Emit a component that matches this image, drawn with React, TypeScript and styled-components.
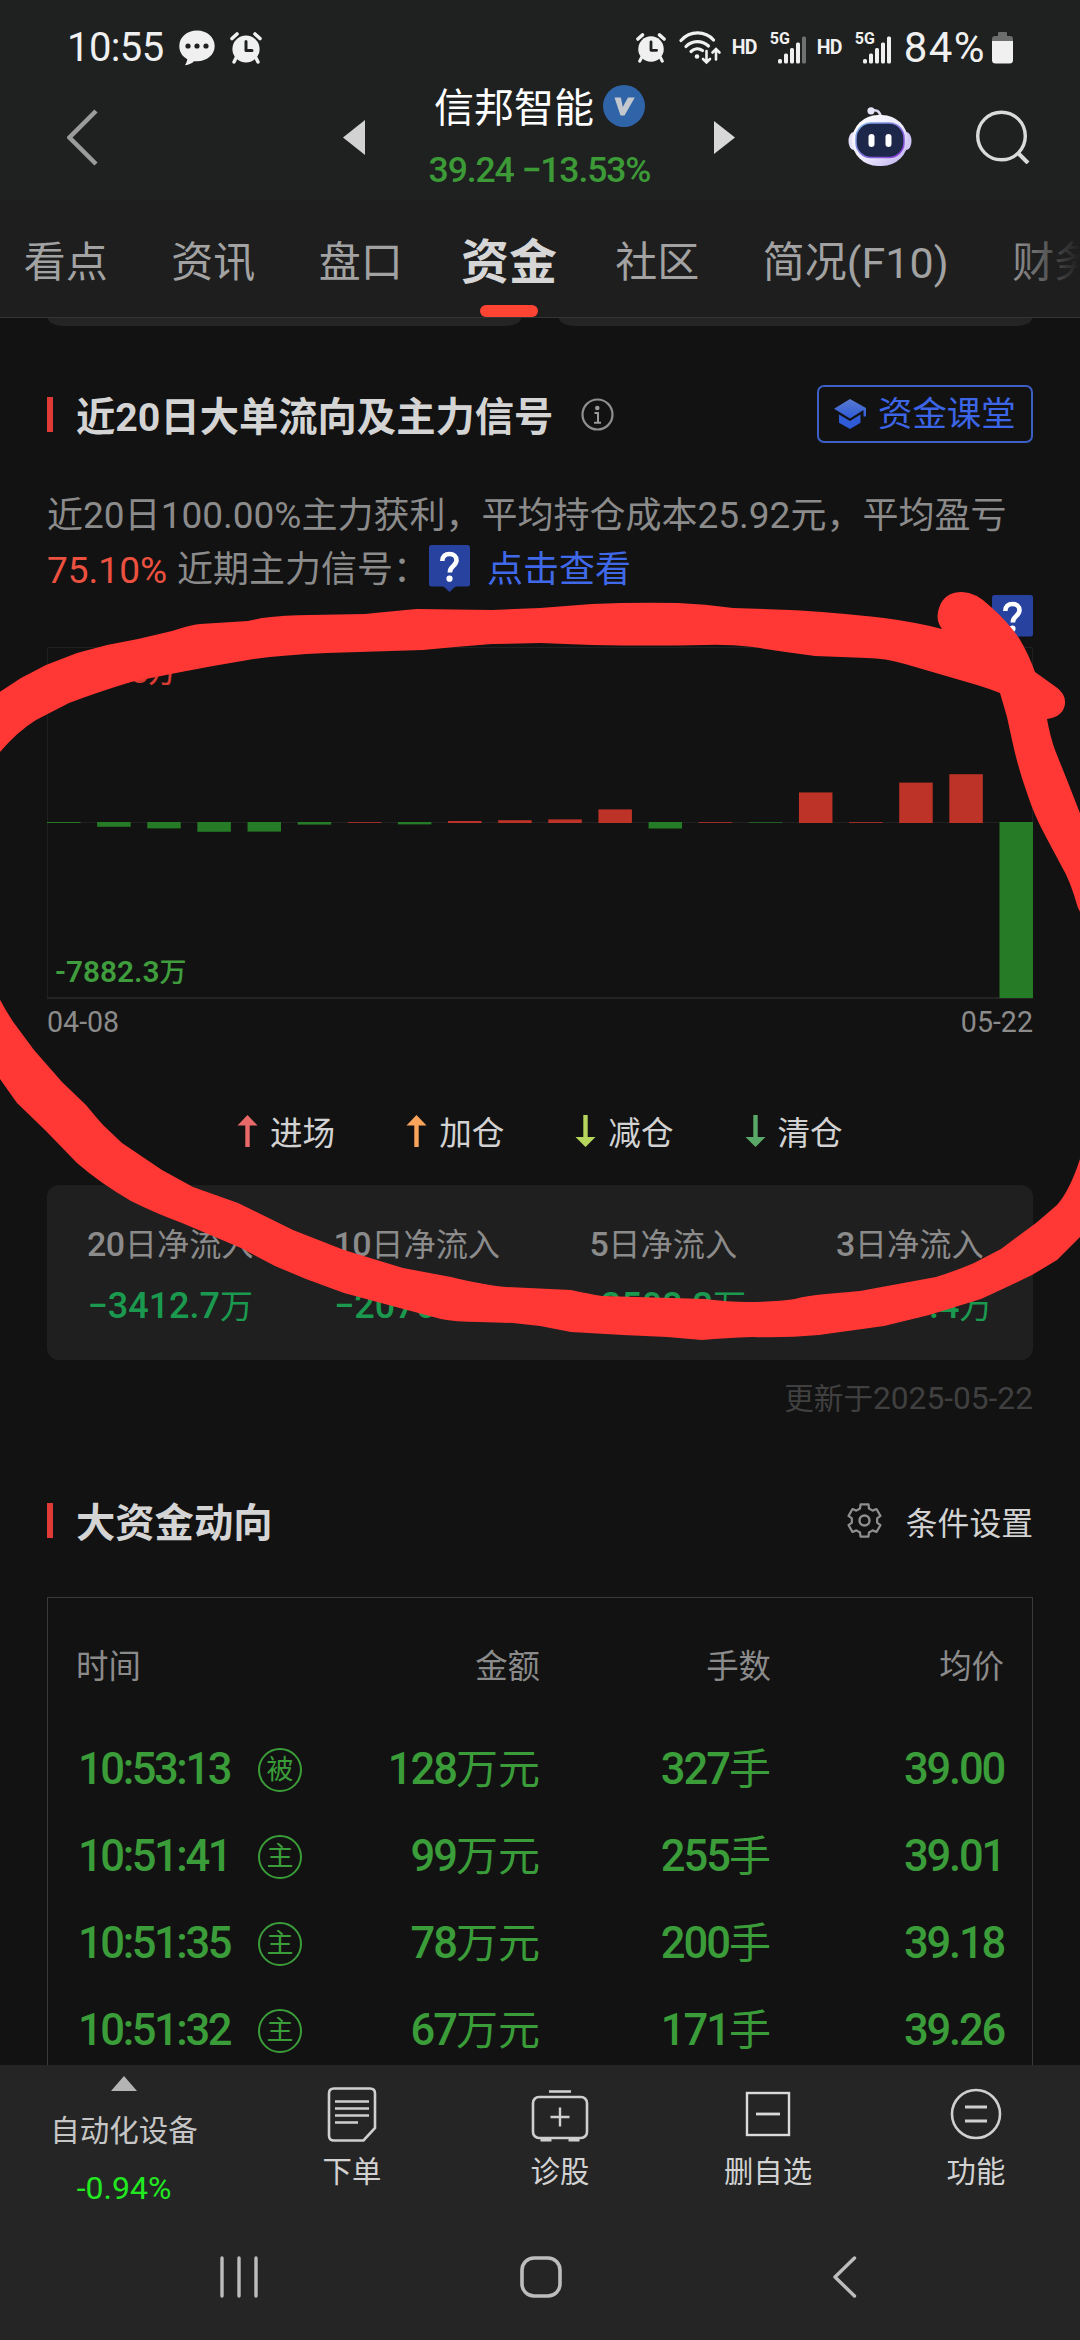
import React from 'react';
import styled, { createGlobalStyle } from 'styled-components';

const GlobalStyle = createGlobalStyle`
  * { box-sizing: border-box; }
  body { margin: 0; background: #121212; }
`;

const fontStack = `Roboto, 'Noto Sans CJK SC', sans-serif`;

const Screen = styled.div`
  position: relative;
  display: flex;
  flex-direction: column;
  width: 1080px;
  height: 2340px;
  overflow: hidden;
  background: #121212;
  color: #d2d2d2;
  font-family: ${fontStack};
  white-space: nowrap;
`;

/* ---------- status bar ---------- */

const Header = styled.header`
  height: 200px;
  flex: none;
  background: #1f2121;
`;

const StatusBar = styled.div`
  display: flex;
  align-items: center;
  height: 80px;
  padding: 15px 67px 0 67px;
  color: #f0f0f0;
`;

const StatusText = styled.span<{ $spacing: number }>`
  font-size: 40px;
  line-height: 48px;
  letter-spacing: ${(p) => p.$spacing}px;
`;

const StatusLeft = styled.div`
  display: flex;
  align-items: center;
  gap: 15px;
`;

const StatusRight = styled.div`
  display: flex;
  align-items: center;
  gap: 0;
  margin-left: auto;
`;

const WifiSlot = styled.span`
  display: flex;
  margin-left: 13px;
`;

const HdText = styled.span`
  width: 26px;
  margin: 0 12px 0 10px;
  font-size: 19.5px;
  line-height: 24px;
  font-weight: 700;
  letter-spacing: -0.8px;
`;

const Signal = styled.div`
  display: flex;
  width: 37px;
  height: 32px;
  align-items: flex-start;
`;

const SignalText = styled.span`
  width: 8px;
  font-size: 16px;
  line-height: 14px;
  font-weight: 700;
`;

const Percent = styled(StatusText)`
  margin-left: 12px;
  margin-right: 6px;
  font-size: 42px;
`;

/* ---------- stock title bar ---------- */

const TitleBar = styled.div`
  display: flex;
  align-items: center;
  height: 114px;
  padding-left: 67px;
`;

const PrevSlot = styled.div`
  display: flex;
  margin-left: 245px;
`;

const StockInfo = styled.div`
  display: flex;
  flex-direction: column;
  align-items: center;
  gap: 11px;
  width: 349px;
  padding-top: 5px;
`;

const StockName = styled.div`
  display: flex;
  align-items: center;
  gap: 9px;
  height: 50px;
  font-size: 40px;
  line-height: 50px;
  color: #ffffff;
`;

const VerifiedBadge = styled.span`
  display: flex;
  align-items: center;
  justify-content: center;
  width: 42px;
  height: 42px;
  margin-bottom: 6px;
  border-radius: 50%;
  background: #3064a8;
`;

const StockQuote = styled.div`
  height: 50px;
  font-size: 35.5px;
  line-height: 50px;
  font-weight: 500;
  letter-spacing: -1.1px;
  color: #3c9a37;
`;

const HeaderActions = styled.div`
  display: flex;
  align-items: center;
  gap: 64px;
  margin-left: 113px;
`;

/* ---------- tabs ---------- */

const TabBar = styled.nav`
  position: relative;
  display: flex;
  flex: none;
  height: 118px;
  border-bottom: 1px solid #353535;
  background: #1e1e1e;
  overflow: hidden;
`;

const TabTrack = styled.div`
  display: flex;
  margin-left: -8px;
`;

const Tab = styled.div<{ $active?: boolean }>`
  position: relative;
  display: flex;
  justify-content: center;
  flex: none;
  width: ${(p) => (p.$active ? '149px' : 'auto')};
  padding: 33px ${(p) => (p.$active ? 0 : 31.75)}px 0;
  font-size: ${(p) => (p.$active ? 48 : 42)}px;
  line-height: 60px;
  font-weight: ${(p) => (p.$active ? 700 : 400)};
  color: ${(p) => (p.$active ? '#d6d6d6' : '#a2a2a2')};
`;

const TabIndicator = styled.span`
  position: absolute;
  left: 45px;
  bottom: 0;
  width: 58px;
  height: 12px;
  border-radius: 6px;
  background: #ff4433;
`;

const TabFade = styled.span`
  position: absolute;
  top: 0;
  right: 0;
  width: 76px;
  height: 116px;
  background: linear-gradient(90deg, rgba(30, 30, 30, 0), #1e1e1e);
`;

/* ---------- content ---------- */

const Content = styled.main`
  display: flex;
  flex-direction: column;
  flex: 1;
  min-height: 0;
  padding: 0 47px;
  overflow: hidden;
`;

const PeekRow = styled.div`
  display: flex;
  flex: none;
  gap: 38px;
  height: 8px;
  padding: 0 1px;
`;

const PeekCard = styled.div`
  flex: 1;
  border-radius: 0 0 16px 16px / 0 0 8px 8px;
  background: #242424;
`;

const SectionHead = styled.div<{ $top: number }>`
  display: flex;
  flex: none;
  align-items: center;
  height: 58px;
  margin-top: ${(p) => p.$top}px;
`;

const Accent = styled.span`
  width: 6px;
  height: 35px;
  background: #e03a37;
`;

const SectionTitle = styled.h2`
  margin: 0 0 0 23px;
  padding-top: 8px;
  font-size: 39.3px;
  line-height: 50px;
  font-weight: 700;
  color: #d4d4d4;
`;

const InfoSlot = styled.span`
  display: flex;
  margin-left: 28px;
`;

const ClassButton = styled.button`
  display: flex;
  align-items: center;
  gap: 11px;
  width: 216px;
  height: 58px;
  margin: 0 0 0 auto;
  padding: 0 0 0 15px;
  border: 2px solid #3b5fc4;
  border-radius: 7px;
  background: transparent;
  font-family: ${fontStack};
  font-size: 34.4px;
  line-height: 50px;
  color: #3c66e6;
`;

const Summary = styled.div`
  flex: none;
  margin-top: 45px;
  font-size: 36px;
  line-height: 55px;
  color: #8b8b8b;
`;

const SummaryLine = styled.div`
  height: 55px;
`;

const SignalLine = styled(SummaryLine)`
  display: flex;
`;

const Latin = styled.span<{ $size: number }>`
  font-size: ${(p) => p.$size}px;
`;

const Gain = styled(Latin)`
  margin-right: 10px;
  color: #ec5140;
`;

const SignalLink = styled.a`
  margin-left: 17px;
  color: #4069ea;
`;

const TagSlot = styled.span`
  display: flex;
  margin: 2px 0 0;
`;

const FlowChart = styled.div`
  position: relative;
  flex: none;
  height: 352px;
  margin-top: 49px;
`;

const ChartTag = styled.div`
  position: absolute;
  top: -52px;
  right: 0;
  display: flex;
`;

const ChartLabel = styled.span<{ $tone: 'up' | 'down' }>`
  position: absolute;
  left: 8px;
  ${(p) => (p.$tone === 'up' ? 'top: 6px;' : 'bottom: 6px;')}
  font-size: 27px;
  line-height: 40px;
  font-weight: 500;
  color: ${(p) => (p.$tone === 'up' ? '#d93c33' : '#3f9d3d')};
`;

const ChartDigits = styled.span`
  font-size: 29.8px;
  font-weight: 600;
`;

const DateRow = styled.div`
  display: flex;
  flex: none;
  justify-content: space-between;
  margin-top: 5px;
  font-size: 28.6px;
  line-height: 36px;
  color: #8b8b8b;
`;

const Legend = styled.div`
  display: flex;
  flex: none;
  gap: 71px;
  margin-top: 71px;
  padding-left: 190px;
`;

const LegendItem = styled.div`
  display: flex;
  align-items: center;
  gap: 12px;
  height: 40px;
  font-size: 32.6px;
  line-height: 40px;
  color: #d2d2d2;
`;

const LegendText = styled.span`
  padding-top: 5px;
`;

const NetCard = styled.div`
  display: grid;
  flex: none;
  grid-template-columns: repeat(4, 1fr);
  height: 175px;
  margin-top: 34px;
  padding-top: 35px;
  border-radius: 12px;
  background: #1f1f1f;
`;

const NetCell = styled.div`
  display: flex;
  flex-direction: column;
  align-items: center;
  gap: 13px;
  line-height: 48px;
`;

const NetLabel = styled.span`
  font-size: 32.2px;
  color: #8b8b8b;
`;

const NetValue = styled.span`
  font-size: 33px;
  color: #1b9a4f;
`;

const Digits = styled.span<{ $size: number; $spacing?: number }>`
  font-size: ${(p) => p.$size}px;
  font-weight: 500;
  letter-spacing: ${(p) => p.$spacing ?? 0}px;
`;

const Updated = styled.div`
  flex: none;
  height: 40px;
  margin-top: 19px;
  text-align: right;
  font-size: 29.6px;
  line-height: 40px;
  color: #404040;
`;

const Settings = styled.div`
  display: flex;
  align-items: center;
  gap: 24px;
  margin-left: auto;
  font-size: 31.8px;
  line-height: 50px;
  color: #d2d2d2;
`;

const SettingsText = styled.span`
  padding-top: 7px;
`;

/* ---------- trade table ---------- */

const Table = styled.div`
  flex: none;
  height: 600px;
  margin-top: 48px;
  padding: 0 28px;
  border: 1px solid #3a3a3a;
`;

const TableRow = styled.div<{ $head?: boolean }>`
  display: grid;
  grid-template-columns: 226px 238px 231px 233px;
  align-items: center;
  height: ${(p) => (p.$head ? 128 : 87)}px;
  padding-top: ${(p) => (p.$head ? 10 : 0)}px;
  font-size: ${(p) => (p.$head ? 32.4 : 42)}px;
  line-height: 60px;
  color: ${(p) => (p.$head ? '#8b8b8b' : '#3a9d39')};
`;

const Cell = styled.div<{ $right?: boolean }>`
  text-align: ${(p) => (p.$right ? 'right' : 'left')};
`;

const TradeCell = styled(Cell)`
  padding-top: 1px;
`;

const TimeCell = styled.div`
  display: flex;
  align-items: center;
  justify-content: space-between;
  padding-left: 2px;
`;

const TimeDigits = styled.span`
  padding-top: 1px;
  font-size: 43.5px;
  font-weight: 500;
  letter-spacing: -2.4px;
`;

const TypeBadge = styled.span`
  display: flex;
  align-items: center;
  justify-content: center;
  width: 44px;
  height: 44px;
  border: 2px solid #3a9d39;
  border-radius: 50%;
  font-size: 27px;
  line-height: 40px;
`;

/* ---------- bottom ---------- */

const BottomArea = styled.footer`
  flex: none;
  height: 275px;
  background: #252525;
`;

const Toolbar = styled.div`
  display: flex;
  height: 145px;
`;

const SectorItem = styled.div`
  display: flex;
  flex-direction: column;
  align-items: center;
  width: 248px;
  padding-top: 11px;
`;

const SectorName = styled.span`
  margin-top: 20px;
  font-size: 29.5px;
  line-height: 40px;
  color: #c6c6c6;
`;

const SectorChange = styled.span`
  margin-top: 16px;
  font-size: 32px;
  line-height: 42px;
  color: #22e822;
`;

const ToolItem = styled.div`
  display: flex;
  flex-direction: column;
  align-items: center;
  width: 208px;
  padding-top: 18px;
  font-size: 29.4px;
  line-height: 40px;
  color: #d2d2d2;
`;

const ToolIcon = styled.span`
  display: flex;
  height: 64px;
  margin-bottom: 5px;
`;

const NavBar = styled.div`
  display: grid;
  grid-template-columns: 301px 312px 25px;
  align-items: center;
  height: 134px;
  padding-left: 219px;
`;

const Annotation = styled.svg`
  position: absolute;
  left: 0;
  top: 0;
  pointer-events: none;
`;

/* ---------- icons ---------- */

const AlarmIcon = ({ size }: { size: number }) => (
  <svg width={size} height={size} viewBox="0 0 32 32">
    <circle cx="16" cy="17" r="13.6" fill="#f0f0f0" />
    <path d="M2 6.5 7 2M30 6.5 25 2" stroke="#f0f0f0" strokeWidth="3.6" strokeLinecap="round" />
    <path d="M6 26 4 30M26 26l2 4" stroke="#f0f0f0" strokeWidth="3.4" strokeLinecap="round" />
    <path d="M16 9.5v9h6" fill="none" stroke="#1f2121" strokeWidth="3" strokeLinejoin="round" strokeLinecap="round" />
  </svg>
);

const ChatIcon = () => (
  <svg width="36" height="36" viewBox="0 0 36 36">
    <path
      d="M18 0.5C8 0.5 0.3 7 0.3 16c0 6 3 10.500 8 13.200-.3 2-1 4-2.300 6 4-.5 7-2 9-4h3c10 0 17.700-6.500 17.700-15.200S28 .5 18 .5z"
      fill="#f0f0f0"
    />
    <circle cx="9" cy="16" r="2.600" fill="#1f2121" />
    <circle cx="18" cy="16" r="2.600" fill="#1f2121" />
    <circle cx="27" cy="16" r="2.600" fill="#1f2121" />
  </svg>
);

const WifiIcon = () => (
  <svg width="43" height="34" viewBox="0 0 43 34" fill="none" stroke="#f0f0f0" strokeLinecap="round">
    <path d="M2 9.500C11-.5 26-.5 34.500 9" strokeWidth="3.200" />
    <path d="M7 15.500c6-6.500 16-6.500 22.500-.5" strokeWidth="3.200" />
    <path d="M12 20.500c3.500-3.200 8-3.500 11.500-1" strokeWidth="3.200" />
    <circle cx="18" cy="25.500" r="2.300" fill="#f0f0f0" stroke="none" />
    <path d="M27.500 20v11M24 28l3.500 3.500L31 28" strokeWidth="2.600" />
    <path d="M37 28.500V18.500M33.500 21.500 37 18l3.500 3.500" strokeWidth="2.600" />
  </svg>
);

const SignalBars = ({ full }: { full: boolean }) => (
  <svg width="29" height="32" viewBox="0 0 29 32">
    <rect x="0" y="27" width="4" height="4.500" rx="1.500" fill="#f0f0f0" />
    <rect x="6" y="21.500" width="4" height="10" rx="1.500" fill="#f0f0f0" />
    <rect x="12" y="16" width="4" height="15.500" rx="1.500" fill="#f0f0f0" />
    <rect x="18" y="10.500" width="4" height="21" rx="1.500" fill="#f0f0f0" />
    <rect x="24" y="4.500" width="4" height="27" rx="1.500" fill={full ? '#f0f0f0' : '#6f7070'} />
  </svg>
);

const BatteryIcon = () => (
  <svg width="21" height="32" viewBox="0 0 21 32">
    <path d="M6 1q0-1 1-1h7q1 0 1 1v3h3q3 0 3 3v3H0V7q0-3 3-3h3z" fill="#6c6d6d" />
    <path d="M0 9h21v19q0 3.500-3.500 3.500h-14Q0 31.500 0 28z" fill="#f0f0f0" />
  </svg>
);

const BackIcon = () => (
  <svg width="31" height="57" viewBox="0 0 31 57">
    <path d="M29 2 2.500 28.500 29 55" fill="none" stroke="#9b9b9b" strokeWidth="4.500" />
  </svg>
);

const VerifiedMark = () => (
  <svg width="21" height="19" viewBox="0 0 21 19">
    <path d="M.5.5h6.300l2 9.500L14 .5h6.800L10.500 18.500H6.500z" fill="#c3c8ce" />
  </svg>
);

const RobotIcon = () => (
  <svg width="64" height="60" viewBox="0 0 64 60">
    <defs>
      <linearGradient id="shell" x1="0" y1="0" x2="1" y2="1">
        <stop offset="0" stopColor="#ffffff" />
        <stop offset="0.550" stopColor="#ece9fb" />
        <stop offset="1" stopColor="#b9a9ee" />
      </linearGradient>
      <linearGradient id="rim" x1="0" y1="0" x2="1" y2="1">
        <stop offset="0" stopColor="#7db8e8" />
        <stop offset="1" stopColor="#8a35d8" />
      </linearGradient>
    </defs>
    <path d="M24 3.500c6-1 8.500 2 8.500 7" fill="none" stroke="#dcdaf0" strokeWidth="2.600" />
    <circle cx="23" cy="3.800" r="3.600" fill="#e6e4f6" />
    <ellipse cx="5.500" cy="34" rx="5" ry="9" fill="#e4e1f8" />
    <ellipse cx="58.500" cy="34" rx="5" ry="9" fill="#cfc6f3" />
    <rect x="4" y="8" width="56" height="51" rx="26" fill="url(#shell)" />
    <rect x="8" y="16" width="48" height="34.500" rx="15" fill="#1c2749" stroke="url(#rim)" strokeWidth="1.500" />
    <rect x="20.500" y="27" width="6" height="13" rx="3" fill="#fff" />
    <rect x="37.500" y="27" width="6" height="13" rx="3" fill="#fff" />
  </svg>
);

const SearchIcon = () => (
  <svg width="54" height="54" viewBox="0 0 54 54" fill="none" stroke="#dadada" strokeWidth="3.400">
    <circle cx="25.500" cy="26" r="23.800" />
    <path d="M42.500 43.500 52 53" strokeWidth="4" />
  </svg>
);

const InfoIcon = () => (
  <svg width="33" height="33" viewBox="0 0 33 33">
    <circle cx="16.500" cy="16.500" r="15" fill="none" stroke="#8f8f8f" strokeWidth="2.200" />
    <circle cx="16.300" cy="10" r="2.300" fill="#9a9a9a" />
    <path d="M13.500 15h3.500v9.500M13 24.800h7" fill="none" stroke="#9a9a9a" strokeWidth="2" />
  </svg>
);

const CapIcon = () => (
  <svg width="33" height="30" viewBox="0 0 33 30">
    <defs>
      <linearGradient id="cap" x1="0" y1="0" x2="0" y2="1">
        <stop offset="0" stopColor="#5a7bd0" />
        <stop offset="1" stopColor="#2d5ad8" />
      </linearGradient>
    </defs>
    <path d="M16 0 32 9v8.500h-2.500V11L16 19.500 0 9.800z" fill="url(#cap)" />
    <path d="M5 15.500 16 22l10.500-6.500v8.200L16 30 5 23.700z" fill="#2f5bd6" />
  </svg>
);

const QuestionTag = ({ tail }: { tail?: boolean }) => (
  <svg width="41" height="47" viewBox="0 0 41 47">
    <rect width="41" height="41.500" rx="2.500" fill="#27429f" />
    {tail && <path d="M14 41h13l-6.500 6z" fill="#27429f" />}
    <path
      d="M13.300 16c0-4.600 3-7 7.200-7s7 2.400 7 6.200c0 3-1.600 4.400-3.700 6.200-2 1.700-3 2.900-3 6.200"
      fill="none"
      stroke="#fff"
      strokeWidth="4.600"
    />
    <circle cx="20.500" cy="33.700" r="3.100" fill="#fff" />
  </svg>
);

const ArrowIcon = ({ color, down }: { color: string; down?: boolean }) => (
  <svg width="21" height="32" viewBox="0 0 21 32">
    <path
      d={down ? 'M8.300 0h4.400v22H20.500L10.500 32 .5 22h7.800z' : 'M8.300 32h4.400V10.500H20.500L10.500 0 .5 10.500h7.800z'}
      fill={color}
    />
  </svg>
);

const gearPath = (() => {
  const pts: string[] = [];
  for (let i = 0; i < 6; i++) {
    const mid = (i * Math.PI) / 3 - Math.PI / 2;
    const spots: Array<[number, number]> = [
      [-0.36, 12.8],
      [-0.24, 16.6],
      [0.24, 16.6],
      [0.36, 12.8],
    ];
    spots.forEach(([a, r]) => {
      pts.push(`${(17.5 + r * Math.cos(mid + a)).toFixed(2)} ${(17.5 + r * Math.sin(mid + a)).toFixed(2)}`);
    });
  }
  return `M${pts.join('L')}Z`;
})();

const GearIcon = () => (
  <svg width="35" height="35" viewBox="0 0 35 35" fill="none" stroke="#8f8f8f" strokeWidth="2.200">
    <path d={gearPath} strokeLinejoin="round" />
    <circle cx="17.500" cy="17.500" r="5" strokeWidth="2.400" />
  </svg>
);

const OrderIcon = () => (
  <svg width="50" height="64" viewBox="0 0 50 64" fill="none" stroke="#cfcfcf" strokeWidth="2.600">
    <path d="M7 5.500h36q5 0 5 5V45L36.500 57.500H7q-5 0-5-5v-42q0-5 5-5z" />
    <path d="M8 18.500h34M8 25.500h34M8 32.500h34M8 39.500h23" strokeWidth="2.600" />
  </svg>
);

const DiagnoseIcon = () => (
  <svg width="58" height="64" viewBox="0 0 58 64" fill="none" stroke="#cfcfcf" strokeWidth="2.600">
    <rect x="2" y="14" width="54" height="41" rx="6" />
    <path d="M18 8.500h22" />
    <path d="M9.500 57h11M37.500 57h11" strokeWidth="3" />
    <path d="M29 24.500v19M19.500 34h19" strokeWidth="2.400" />
  </svg>
);

const RemoveIcon = () => (
  <svg width="46" height="64" viewBox="0 0 46 64" fill="none" stroke="#dadada" strokeWidth="2.400">
    <rect x="2" y="10" width="42" height="42" />
    <path d="M11 31h24" strokeWidth="2.800" />
  </svg>
);

const FunctionIcon = () => (
  <svg width="52" height="64" viewBox="0 0 52 64" fill="none" stroke="#cfcfcf" strokeWidth="2.600">
    <circle cx="26" cy="31" r="24" />
    <path d="M15 24h22M15 38h22" strokeWidth="2.800" />
  </svg>
);

/* ---------- data ---------- */

const tabsBefore = ['看点', '资讯', '盘口'];

const flowBars = [
  -1, -4.8, -6.4, -9.8, -9.6, -2.6, 0.8, -2.4, 2, 2.8, 3.6, 13.6, -6.5, 0.8, -0.7, 30.6, 0.8, 40.4, 48.8, -176,
];

const legend = [
  { label: '进场', color: '#e86a68', down: false },
  { label: '加仓', color: '#fba45c', down: false },
  { label: '减仓', color: '#b5d55c', down: true },
  { label: '清仓', color: '#5aa867', down: true },
];

const netFlow = [
  { days: '20', value: '−3412.7' },
  { days: '10', value: '−2076.5' },
  { days: '5', value: '−2508.2' },
  { days: '3', value: '−3889.4' },
];

const trades = [
  { time: '10:53:13', type: '被', amount: '128', lots: '327', price: '39.00' },
  { time: '10:51:41', type: '主', amount: '99', lots: '255', price: '39.01' },
  { time: '10:51:35', type: '主', amount: '78', lots: '200', price: '39.18' },
  { time: '10:51:32', type: '主', amount: '67', lots: '171', price: '39.26' },
];

const tools = [
  { label: '下单', icon: <OrderIcon /> },
  { label: '诊股', icon: <DiagnoseIcon /> },
  { label: '删自选', icon: <RemoveIcon /> },
  { label: '功能', icon: <FunctionIcon /> },
];

/* outline of the hand-drawn marker ring, upper and lower strokes */
const markerTop =
  'M-5 695L21 678 46 665 77 653 107 645 138 639 172 631Q190 625 200 624L248 621 262 618Q285 615 310 615L365 614Q395 611 417 609L492 610 540 608 592 604Q635 602 678 603 705 604 733 608L790 610Q830 612 884 618 915 622 942 629 935 620 939 608 944 592 962 592 976 592 991 607 1007 621 1019 638 1029 655 1035 672L1056 687Q1066 694 1065 704 1063 717 1047 719 1050 736 1055 750L1067 780 1085 826V921L1078 908Q1070 880 1062 867L1046 837Q1034 815 1027 793 1018 768 1012 740L1007 717 1000 693Q990 689 977 685L905 664Q885 658 867 658L815 656Q785 652 753 647 725 644 705 645 650 646 592 645L540 643 492 644 455 647 423 650 327 653Q280 655 248 660L213 666 176 673 131 682Q98 692 69 703L36 720Q15 733-5 758Z';
const markerBottom =
  'M-5 990Q5 1010 14 1023L34 1050 62 1082 86 1105Q95 1116 103 1125L122 1143 162 1170 193 1187 238 1203 293 1230 344 1250 403 1268 451 1277Q485 1285 506 1287L571 1290Q590 1294 602 1296L705 1299Q728 1302 747 1302 775 1302 795 1299 805 1296 826 1294L860 1291 936 1277Q958 1270 974 1263L1001 1249 1036 1223 1057 1205Q1073 1187 1085 1142V1232L1057 1260 1032 1275Q1005 1288 981 1299L929 1315 884 1326 819 1335Q785 1338 753 1337 725 1338 702 1340L667 1337 623 1335 571 1332 540 1326 513 1323 479 1322Q455 1322 441 1319L396 1307 344 1293 306 1279 275 1266 241 1248 182 1223Q155 1213 131 1201 100 1183 77 1163L45 1130 17 1103-5 1072Z';

const BASELINE = 175.5;

export default function App() {
  return (
    <>
      <GlobalStyle />
      <Screen>
        <Header>
          <StatusBar>
            <StatusLeft>
              <StatusText $spacing={-0.6}>10:55</StatusText>
              <ChatIcon />
              <AlarmIcon size={32} />
            </StatusLeft>
            <StatusRight>
              <AlarmIcon size={30} />
              <WifiSlot>
                <WifiIcon />
              </WifiSlot>
              <HdText>HD</HdText>
              <Signal>
                <SignalText>5G</SignalText>
                <SignalBars full={false} />
              </Signal>
              <HdText>HD</HdText>
              <Signal>
                <SignalText>5G</SignalText>
                <SignalBars full />
              </Signal>
              <Percent $spacing={1.4}>84%</Percent>
              <BatteryIcon />
            </StatusRight>
          </StatusBar>
          <TitleBar>
            <BackIcon />
            <PrevSlot>
              <svg width="22" height="35" viewBox="0 0 22 35">
                <path d="M0 17.500 22 0v35z" fill="#d2d2d2" />
              </svg>
            </PrevSlot>
            <StockInfo>
              <StockName>
                信邦智能
                <VerifiedBadge>
                  <VerifiedMark />
                </VerifiedBadge>
              </StockName>
              <StockQuote>39.24 −13.53%</StockQuote>
            </StockInfo>
            <svg width="21" height="33" viewBox="0 0 21 33">
              <path d="M0 0 21 16.500 0 33z" fill="#d8d8d8" />
            </svg>
            <HeaderActions>
              <RobotIcon />
              <SearchIcon />
            </HeaderActions>
          </TitleBar>
        </Header>

        <TabBar>
          <TabTrack>
            {tabsBefore.map((t) => (
              <Tab key={t}>{t}</Tab>
            ))}
            <Tab $active>
              资金
              <TabIndicator />
            </Tab>
            <Tab>社区</Tab>
            <Tab>
              简况<Latin $size={43}>(F10)</Latin>
            </Tab>
            <Tab>财务</Tab>
          </TabTrack>
          <TabFade />
        </TabBar>

        <Content>
          <PeekRow>
            <PeekCard />
            <PeekCard />
          </PeekRow>

          <SectionHead $top={59}>
            <Accent />
            <SectionTitle>近20日大单流向及主力信号</SectionTitle>
            <InfoSlot>
              <InfoIcon />
            </InfoSlot>
            <ClassButton>
              <CapIcon />
              资金课堂
            </ClassButton>
          </SectionHead>

          <Summary>
            <SummaryLine>
              近<Latin $size={37}>20</Latin>日<Latin $size={37}>100.00%</Latin>主力获利，平均持仓成本
              <Latin $size={37}>25.92</Latin>元，平均盈亏
            </SummaryLine>
            <SignalLine>
              <Gain $size={37}>75.10%</Gain>
              近期主力信号：
              <TagSlot>
                <QuestionTag tail />
              </TagSlot>
              <SignalLink>点击查看</SignalLink>
            </SignalLine>
          </Summary>

          <FlowChart>
            <svg width="986" height="352" viewBox="0 0 986 352">
              <path d="M0.500 0.500h985v350.500H.5zM0 175.500h986" fill="none" stroke="#202020" />
              <path d="M0 351h986" stroke="#232323" strokeWidth="2" />
              {flowBars.map((v, i) => (
                <rect
                  key={i}
                  x={i * 50.13}
                  y={v > 0 ? BASELINE + 0.5 - v : BASELINE - 0.5}
                  width={33.5}
                  height={Math.abs(v)}
                  fill={v > 0 ? '#bd3327' : '#267b26'}
                />
              ))}
            </svg>
            <ChartLabel $tone="up">
              <ChartDigits>7882.3</ChartDigits>万
            </ChartLabel>
            <ChartLabel $tone="down">
              <ChartDigits>-7882.3</ChartDigits>万
            </ChartLabel>
            <ChartTag>
              <QuestionTag />
            </ChartTag>
          </FlowChart>
          <DateRow>
            <span>04-08</span>
            <span>05-22</span>
          </DateRow>

          <Legend>
            {legend.map((l) => (
              <LegendItem key={l.label}>
                <ArrowIcon color={l.color} down={l.down} />
                <LegendText>{l.label}</LegendText>
              </LegendItem>
            ))}
          </Legend>

          <NetCard>
            {netFlow.map((n) => (
              <NetCell key={n.days}>
                <NetLabel>
                  <Digits $size={34} $spacing={-0.4}>
                    {n.days}
                  </Digits>
                  日净流入
                </NetLabel>
                <NetValue>
                  <Digits $size={36}>{n.value}</Digits>万
                </NetValue>
              </NetCell>
            ))}
          </NetCard>
          <Updated>
            更新于<Latin $size={31.7}>2025-05-22</Latin>
          </Updated>

          <SectionHead $top={72}>
            <Accent />
            <SectionTitle>大资金动向</SectionTitle>
            <Settings>
              <GearIcon />
              <SettingsText>条件设置</SettingsText>
            </Settings>
          </SectionHead>

          <Table>
            <TableRow $head>
              <Cell>时间</Cell>
              <Cell $right>金额</Cell>
              <Cell $right>手数</Cell>
              <Cell $right>均价</Cell>
            </TableRow>
            {trades.map((t) => (
              <TableRow key={t.time}>
                <TimeCell>
                  <TimeDigits>{t.time}</TimeDigits>
                  <TypeBadge>{t.type}</TypeBadge>
                </TimeCell>
                <TradeCell $right>
                  <Digits $size={43.5} $spacing={-2}>
                    {t.amount}
                  </Digits>
                  万元
                </TradeCell>
                <TradeCell $right>
                  <Digits $size={43.5} $spacing={-2}>
                    {t.lots}
                  </Digits>
                  手
                </TradeCell>
                <TradeCell $right>
                  <Digits $size={43.5} $spacing={-2.2}>
                    {t.price}
                  </Digits>
                </TradeCell>
              </TableRow>
            ))}
          </Table>
        </Content>

        <BottomArea>
          <Toolbar>
            <SectorItem>
              <svg width="26" height="15" viewBox="0 0 26 15">
                <path d="M13 0 26 15H0z" fill="#b4b4b4" />
              </svg>
              <SectorName>自动化设备</SectorName>
              <SectorChange>-0.94%</SectorChange>
            </SectorItem>
            {tools.map((t) => (
              <ToolItem key={t.label}>
                <ToolIcon>{t.icon}</ToolIcon>
                {t.label}
              </ToolItem>
            ))}
          </Toolbar>
          <NavBar>
            <svg width="40" height="42" viewBox="0 0 40 42" stroke="#bdbdbd" strokeWidth="3.400" strokeLinecap="round">
              <path d="M3 2v38M20 2v38M37 2v38" />
            </svg>
            <svg width="42" height="42" viewBox="0 0 42 42">
              <rect x="2" y="2" width="38" height="38" rx="12" fill="none" stroke="#bdbdbd" strokeWidth="3.600" />
            </svg>
            <svg width="25" height="42" viewBox="0 0 25 42">
              <path d="M22.500 2 3 21l19.500 19" fill="none" stroke="#bdbdbd" strokeWidth="3.400" strokeLinecap="round" strokeLinejoin="round" />
            </svg>
          </NavBar>
        </BottomArea>

        <Annotation width="1080" height="2340" viewBox="0 0 1080 2340">
          <path d={markerTop} fill="#ff3835" />
          <path d={markerBottom} fill="#ff3835" />
        </Annotation>
      </Screen>
    </>
  );
}
